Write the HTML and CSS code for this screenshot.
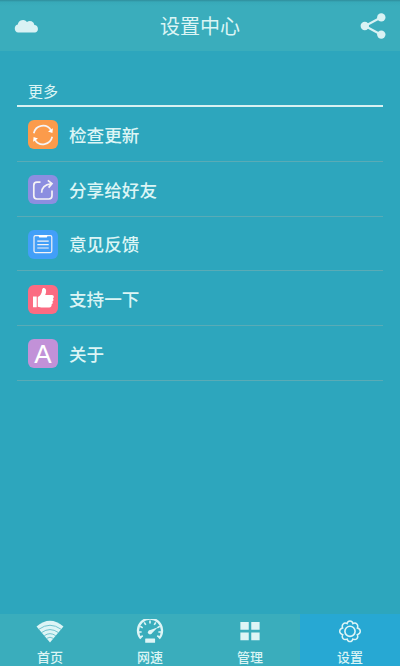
FILE: index.html
```html
<!DOCTYPE html>
<html lang="zh-CN">
<head>
  <meta charset="UTF-8">
  <meta name="viewport" content="width=device-width, initial-scale=1.0">
  <title>设置中心</title>
  <link rel="stylesheet" href="styles.css">
</head>
<body>

  <div class="app">
    <header class="header">
      <svg class="cloud" width="26" height="16" viewBox="0 0 26 16">
        <path d="M4.2 14.6 A4.1 4.1 0 0 1 3.8 6.6 A5.3 5.3 0 0 1 13 3.9 A4.6 4.6 0 0 1 20.4 7 A3.9 3.9 0 0 1 21.2 14.6 Z"/>
      </svg>
      <h1>设置中心</h1>
      <svg class="share" width="26" height="26" viewBox="0 0 26 26">
        <path d="M21.3 4.3 L5 13 L21.3 21.7" fill="none" stroke="#d9f2f4" stroke-width="2.1"/>
        <circle cx="21.3" cy="4.4" r="4.2"/>
        <circle cx="4.8" cy="13" r="4.2"/>
        <circle cx="21.3" cy="21.6" r="4.2"/>
      </svg>
    </header>

    <main class="content">
      <h2>更多</h2>
      <ul class="list">
        <li>
          <span class="icon orange">
            <svg width="30" height="30" viewBox="0 0 30 30">
              <path class="line" d="M5.8 13.2 A9.5 9.5 0 0 1 23 10 M24.2 16.8 A9.5 9.5 0 0 1 7 20"/>
              <path class="solid" d="M24.9 8.2 L24.4 13 L20 11.4 Z M5.1 21.8 L5.6 17 L10 18.6 Z"/>
            </svg>
          </span>
          <span>检查更新</span>
        </li>
        <li>
          <span class="icon purple">
            <svg width="30" height="30" viewBox="0 0 30 30">
              <path class="line" d="M12.5 7.2 H9 Q5.8 7.2 5.8 10.4 V20.8 Q5.8 24 9 24 H20.8 Q24 24 24 20.8 V15.5"/>
              <path class="line" d="M13.6 17.8 Q13.8 9.6 23 8.8 M19.8 5.4 L24 8.7 L20.6 12.6"/>
            </svg>
          </span>
          <span>分享给好友</span>
        </li>
        <li>
          <span class="icon blue">
            <svg width="30" height="30" viewBox="0 0 30 30">
              <rect class="line thin" x="6" y="6.6" width="17.8" height="17" rx="1.5"/>
              <path class="line thin" d="M9.3 12.2 H20.7 M9.3 15.6 H20.7 M9.3 19 H20.7"/>
              <path class="solid" d="M10.2 6 H19.8 L18.8 8.6 H11.2 Z"/>
            </svg>
          </span>
          <span>意见反馈</span>
        </li>
        <li>
          <span class="icon pink">
            <svg width="30" height="30" viewBox="0 0 30 30">
              <path class="solid" d="M5 12.5 H8.7 V23.3 H5 Z M9.8 13 C12.3 11.8 13.8 9.8 14.1 6 C14.3 3.2 17.9 3.4 18.1 6.6 C18.2 8.5 17.7 9.8 17.2 11 H24 C26.3 11.2 26.2 14 24.8 14.5 C26 15.4 25.5 17.2 24.3 17.6 C25.2 18.6 24.7 20.2 23.5 20.5 C24 22 23 23.6 21.2 23.6 H14.5 C12.5 23.6 11.5 23 9.8 22.8 Z"/>
            </svg>
          </span>
          <span>支持一下</span>
        </li>
        <li>
          <span class="icon violet">A</span>
          <span>关于</span>
        </li>
      </ul>
    </main>

    <nav class="tabs">
      <a class="tab">
        <svg width="30" height="26" viewBox="0 0 30 26">
          <path d="M1 7.8 Q15 -4.2 29 7.8 L15 24.5 Z"/>
          <path class="gap" d="M3.4 10.7 Q15 2.3 26.6 10.7 M6.3 14.1 Q15 7.9 23.7 14.1 M9 17.4 Q15 13.1 21 17.4 M11.4 20.2 Q15 17.7 18.6 20.2"/>
        </svg>
        <span>首页</span>
      </a>
      <a class="tab">
        <svg width="30" height="26" viewBox="0 0 30 26">
          <path class="stroke" d="M5.6 20.3 A12.5 12.5 0 1 1 24.4 20.3" stroke-width="2.4"/>
          <path class="stroke" d="M3 13.5 H6.3 M4.8 7.6 L7.4 9.2 M9 3.5 L10.6 6.1 M15 1.5 V4.8 M21 3.5 L19.4 6.1 M25.2 7.6 L22.6 9.2 M27 13.5 H23.7 M5 18.9 L7.5 17.5 M25 18.9 L22.5 17.5" stroke-width="1.7"/>
          <path d="M23.2 8.6 L16.4 15.4 L14 12 Z"/>
          <circle cx="15" cy="13.8" r="2.2"/>
          <rect x="10" y="20.2" width="10.3" height="4.6" rx=".6"/>
        </svg>
        <span>网速</span>
      </a>
      <a class="tab">
        <svg width="30" height="26" viewBox="0 0 30 26">
          <path d="M5 3 H13.7 V11.2 H5 Z M16.3 3 H25 V11.2 H16.3 Z M5 14 H13.7 V22.2 H5 Z M16.3 14 H25 V22.2 H16.3 Z"/>
        </svg>
        <span>管理</span>
      </a>
      <a class="tab active">
        <svg width="30" height="26" viewBox="0 0 30 26">
          <path class="stroke" d="M12 4.8 Q12.6 2.1 15 2.1 Q17.4 2.1 18 4.8 Q20.4 3.4 22.1 5.1 Q23.8 6.8 22.6 9.4 Q25.7 10.2 25.7 12.8 Q25.7 15.4 22.6 16.2 Q23.8 18.8 22.1 20.5 Q20.4 22.2 18 20.8 Q17.4 23.5 15 23.5 Q12.6 23.5 12 20.8 Q9.6 22.2 7.9 20.5 Q6.2 18.8 7.4 16.2 Q4.3 15.4 4.3 12.8 Q4.3 10.2 7.4 9.4 Q6.2 6.8 7.9 5.1 Q9.6 3.4 12 4.8 Z" stroke-width="1.5"/>
          <circle class="stroke" cx="15" cy="12.8" r="5.3" stroke-width="1.7"/>
        </svg>
        <span>设置</span>
      </a>
    </nav>
  </div>

</body>
</html>
```
FILE: styles.css
```css
* {
  box-sizing: border-box;
}

body {
  margin: 0;
  font-family: "Noto Sans CJK SC", sans-serif;
  font-weight: 500;
  color: #dcf5f5;
  background-color: #2da6bd;
}

.app {
  display: flex;
  flex-direction: column;
  height: 666px;
}

.header {
  display: flex;
  align-items: center;
  justify-content: space-between;
  height: 51px;
  padding: 1px 14px 0 14px;
  background: linear-gradient(#2f8d9b 0, #37a9b8 2px, #3aadbc 6px);
}

.header svg {
  fill: #d9f2f4;
}

.header h1 {
  margin: 0;
  font-size: 20px;
  font-weight: 400;
  line-height: 30px;
}

.content {
  flex: 1;
  padding: 28px 17px 0;
}

.content h2 {
  height: 28px;
  margin: 0;
  padding-left: 11px;
  border-bottom: 2px solid #d8f1f2;
  font-size: 15px;
  font-weight: 400;
  line-height: 23px;
}

.list {
  margin: 0;
  padding: 0;
  list-style: none;
}

.list li {
  display: flex;
  align-items: center;
  gap: 11px;
  height: 54.75px;
  padding: 2px 0 0 11px;
  border-bottom: 1px solid #59abb6;
  font-size: 17.6px;
  line-height: 26px;
}

.icon {
  display: flex;
  align-items: center;
  justify-content: center;
  width: 30px;
  height: 29px;
  border-radius: 6px;
  overflow: hidden;
}

.orange {
  background-color: #fb9b4b;
}

.purple {
  background-color: #8c8ee0;
}

.blue {
  background-color: #429ff8;
}

.pink {
  background-color: #fb6b82;
}

.violet {
  background-color: #c291d8;
  color: #fff;
  font-family: "Liberation Sans", sans-serif;
  font-size: 26px;
  font-weight: 400;
}

.line {
  fill: none;
  stroke: #f5f3f5;
  stroke-width: 1.7;
}

.thin {
  stroke-width: 1.2;
}

.solid {
  fill: #fff;
}

.tabs {
  display: flex;
  height: 52px;
  background-color: #3aadbc;
}

.tab {
  display: flex;
  flex: 1;
  flex-direction: column;
  align-items: center;
  padding-top: 5px;
  font-size: 13px;
  line-height: 18px;
}

.tab svg {
  margin-bottom: 4px;
  fill: #def5f6;
}

.tab .stroke {
  fill: none;
  stroke: #def5f6;
}

.tab .gap {
  fill: none;
  stroke: #5fbcc8;
  stroke-width: .9;
}

.active {
  background-color: #27a8d3;
}
```
